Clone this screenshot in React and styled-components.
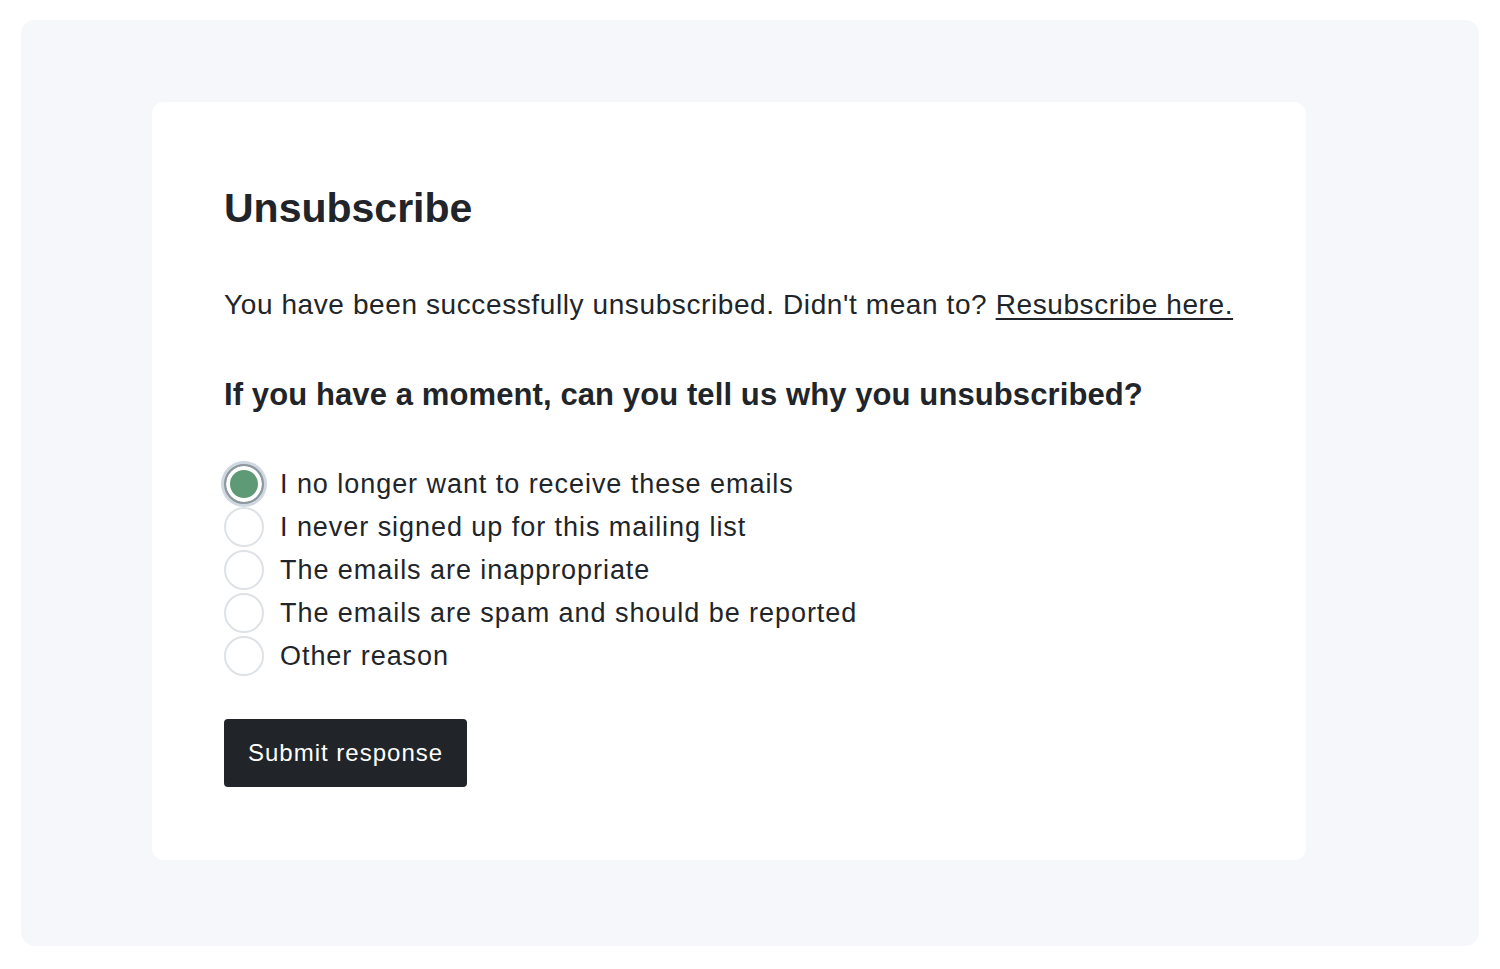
import React, { useState } from 'react';
import styled, { createGlobalStyle } from 'styled-components';

const GlobalStyle = createGlobalStyle`
  html, body {
    margin: 0;
    padding: 0;
    background: #ffffff;
    font-family: "Liberation Sans", Arial, sans-serif;
    color: #212529;
  }
  * {
    box-sizing: border-box;
  }
`;

const Page = styled.div`
  padding: 20px 21px 23px;
`;

const Panel = styled.div`
  background: #f5f7fa;
  border-radius: 14px;
  height: 926px;
  padding: 82px 173px 0 131px;
`;

const Card = styled.div`
  background: #ffffff;
  border-radius: 12px;
  height: 758px;
  padding: 82px 72px 0 72px;
`;

const Title = styled.h1`
  margin: 0 0 53px;
  font-size: 41px;
  line-height: 48px;
  font-weight: 700;
`;

const Lead = styled.p`
  margin: 0 0 50px;
  font-size: 28px;
  line-height: 40px;
  letter-spacing: 0.6px;
`;

const Link = styled.a`
  color: #212529;
  text-decoration: underline;
  text-underline-offset: 4px;
  text-decoration-thickness: 2px;
`;

const Question = styled.h2`
  margin: 0 0 49px;
  font-size: 31px;
  line-height: 40px;
  font-weight: 700;
  letter-spacing: 0.1px;
`;

const Options = styled.div`
  display: flex;
  flex-direction: column;
  gap: 3px;
`;

const Option = styled.label`
  display: flex;
  align-items: center;
  gap: 16px;
  height: 40px;
  font-size: 27px;
  letter-spacing: 0.95px;
  cursor: pointer;
`;

const RadioDot = styled.span`
  width: 40px;
  height: 40px;
  border-radius: 50%;
  border: 2px solid ${({ $checked }) => ($checked ? '#8e969e' : '#dee2e6')};
  background: ${({ $checked }) => ($checked ? '#5e9a75' : '#ffffff')};
  box-shadow: ${({ $checked }) =>
    $checked ? 'inset 0 0 0 4px #ffffff, 0 0 0 3px #cfd7e1' : 'none'};
  flex-shrink: 0;
`;

const HiddenInput = styled.input`
  display: none;
`;

const SubmitButton = styled.button`
  margin-top: 43px;
  height: 68px;
  padding: 0 24px;
  background: #212529;
  color: #ffffff;
  border: none;
  border-radius: 4px;
  font-family: "Liberation Sans", Arial, sans-serif;
  font-size: 24px;
  letter-spacing: 1px;
  cursor: pointer;
`;

const reasons = [
  'I no longer want to receive these emails',
  'I never signed up for this mailing list',
  'The emails are inappropriate',
  'The emails are spam and should be reported',
  'Other reason',
];

export default function App() {
  const [selected, setSelected] = useState(0);
  return (
    <>
      <GlobalStyle />
      <Page>
        <Panel>
          <Card>
            <Title>Unsubscribe</Title>
            <Lead>
              You have been successfully unsubscribed. Didn't mean to?{' '}
              <Link href="#">Resubscribe here.</Link>
            </Lead>
            <Question>
              If you have a moment, can you tell us why you unsubscribed?
            </Question>
            <Options>
              {reasons.map((reason, i) => (
                <Option key={reason}>
                  <HiddenInput
                    type="radio"
                    name="reason"
                    checked={selected === i}
                    onChange={() => setSelected(i)}
                  />
                  <RadioDot $checked={selected === i} />
                  {reason}
                </Option>
              ))}
            </Options>
            <SubmitButton>Submit response</SubmitButton>
          </Card>
        </Panel>
      </Page>
    </>
  );
}
